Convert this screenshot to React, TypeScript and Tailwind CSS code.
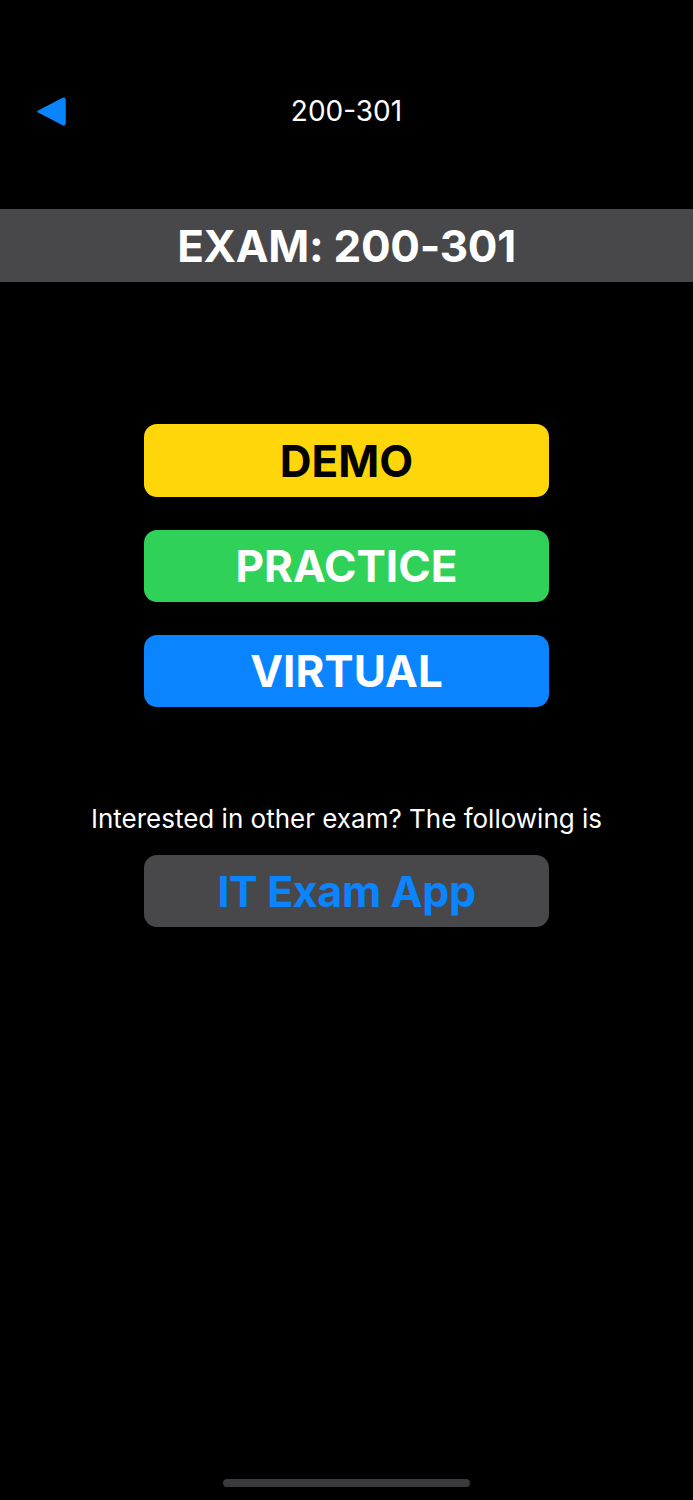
export default function App() {
  return (
    <div
      className="min-h-[1500px] bg-black flex flex-col text-white"
      style={{ fontFamily: "Inter, 'Liberation Sans', sans-serif" }}
    >
      {/* Nav bar */}
      <div className="mt-[86px] h-[50px] grid grid-cols-[1fr_auto_1fr] items-center">
        <div className="pl-[36px] flex items-center">
          <svg width="30" height="30" viewBox="0 0 30 30">
            <path
              d="M2 15.5 L27 2.5 Q29 1.5 29 4 L29 27 Q29 29.5 27 28.5 Z"
              fill="#0A84FF"
              stroke="#0A84FF"
              strokeWidth="1.5"
              strokeLinejoin="round"
            />
          </svg>
        </div>
        <div className="text-[28px] font-normal leading-none">200-301</div>
        <div />
      </div>

      {/* Exam header */}
      <div className="mt-[73px] h-[73px] bg-[#48484a] flex items-center justify-center">
        <span className="text-[44px] font-bold leading-none tracking-[-0.3px]">EXAM: 200-301</span>
      </div>

      {/* Modes */}
      <div className="mt-[142px] flex flex-col items-center gap-[33px]">
        <button className="w-[405px] h-[73px] rounded-[13px] bg-[#FFD60A] text-black text-[44px] font-bold leading-none flex items-center justify-center">
          DEMO
        </button>
        <button className="w-[405px] h-[72px] rounded-[13px] bg-[#30D158] text-white text-[44px] font-bold leading-none flex items-center justify-center">
          PRACTICE
        </button>
        <button className="w-[405px] h-[72px] rounded-[13px] bg-[#0A84FF] text-white text-[44px] font-bold leading-none flex items-center justify-center">
          VIRTUAL
        </button>
      </div>

      {/* Other exams */}
      <div className="mt-[98px] flex flex-col items-center">
        <p className="text-[26px] leading-[28px]">Interested in other exam? The following is</p>
        <button className="mt-[22px] w-[405px] h-[72px] rounded-[13px] bg-[#48484a] text-[#0A84FF] text-[43px] font-bold leading-none tracking-[-0.4px] flex items-center justify-center">
          IT Exam App
        </button>
      </div>

      <div className="flex-1" />

      {/* Home indicator */}
      <div className="mb-[13px] flex justify-center">
        <div className="w-[247px] h-[8px] rounded-full bg-[#3a3a3c]" />
      </div>
    </div>
  );
}
